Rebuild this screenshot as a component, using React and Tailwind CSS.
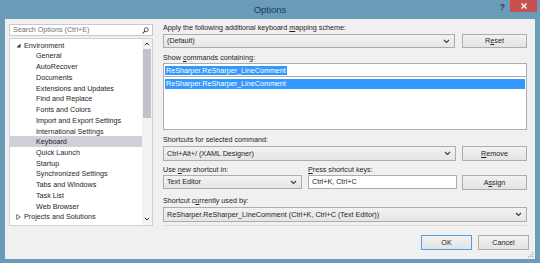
import React from "react";

const F = "font-['Liberation_Sans',Arial,sans-serif]";

function Chevron({ className = "" }) {
  return (
    <svg width="7" height="5" viewBox="0 0 7 5" className={className}>
      <polyline points="1,1 3.5,3.5 6,1" fill="none" stroke="#3c3c3c" strokeWidth="1.1" />
    </svg>
  );
}

function Combo({ text, className = "", h = "h-[14px]" }) {
  return (
    <div className={`${h} border border-[#acacac] bg-gradient-to-b from-[#f2f2f2] to-[#e5e5e5] flex items-center pl-[3px] pr-[4px] ${className}`}>
      <span className="flex-1 truncate text-[7.2px] text-[#1e1e1e] leading-[10px]">{text}</span>
      <Chevron />
    </div>
  );
}

function Btn({ children, className = "", h = "h-[14px]" }) {
  return (
    <div className={`${h} w-[65px] border border-[#adadad] bg-gradient-to-b from-[#f2f2f2] to-[#e3e3e3] flex items-center justify-center text-[7.2px] text-[#1e1e1e] leading-none ${className}`}>
      {children}
    </div>
  );
}

const tree = [
  "General",
  "AutoRecover",
  "Documents",
  "Extensions and Updates",
  "Find and Replace",
  "Fonts and Colors",
  "Import and Export Settings",
  "International Settings",
  "Keyboard",
  "Quick Launch",
  "Startup",
  "Synchronized Settings",
  "Tabs and Windows",
  "Task List",
  "Web Browser",
];

export default function App() {
  return (
    <div className={`w-[540px] h-[263px] bg-[#6a9cb9] flex flex-col ${F}`}>
      {/* Title bar */}
      <div className="h-[19px] grid grid-cols-[1fr_auto_1fr]">
        <div />
        <div className="text-[9.5px] text-[#1d3b50] leading-[19px]">Options</div>
        <div className="flex justify-end items-start">
          <span className="text-[8.5px] font-bold text-[#1d3b50] leading-[14px] mr-[5px]">?</span>
          <div className="w-[27px] h-[12px] bg-[#c75050] flex items-center justify-center mr-[3px]">
            <svg width="6" height="6" viewBox="0 0 6 6">
              <path d="M0.5 0.5 L5.5 5.5 M5.5 0.5 L0.5 5.5" stroke="#ffffff" strokeWidth="1.3" />
            </svg>
          </div>
        </div>
      </div>

      {/* Content */}
      <div className="mx-[5px] h-[240px] bg-[#f0f0f0] flex relative">
        {/* Left column */}
        <div className="ml-[4px] w-[144px] pt-[5px] flex flex-col">
          <div className="h-[12px] bg-white border border-[#c7c9d1] flex items-center pl-[3px] pr-[3px]">
            <span className="flex-1 text-[7.2px] text-[#717171] leading-none">Search Options (Ctrl+E)</span>
            <svg width="7" height="7" viewBox="0 0 7 7">
              <circle cx="4.3" cy="2.7" r="2" fill="none" stroke="#444" strokeWidth="0.9" />
              <path d="M2.9 4.1 L0.6 6.4" stroke="#444" strokeWidth="1.1" />
            </svg>
          </div>
          <div className="mt-[2px] h-[188px] bg-white border border-[#cfd1d8] flex overflow-hidden">
            <div className="flex-1 pt-[1px] flex flex-col text-[7.2px] text-[#1e1e1e] leading-none overflow-hidden">
              <div className="h-[10.73px] shrink-0 flex items-center">
                <svg width="5" height="5" viewBox="0 0 5 5" className="ml-[6px] mr-[3px]">
                  <polygon points="4.5,0.5 4.5,4.5 0.5,4.5" fill="#333" />
                </svg>
                <span>Environment</span>
              </div>
              {tree.map((t) => (
                <div
                  key={t}
                  className={`h-[10.73px] shrink-0 flex items-center pl-[26px] ${t === "Keyboard" ? "bg-[#cfd0d8]" : ""}`}
                >
                  {t}
                </div>
              ))}
              <div className="h-[10.73px] shrink-0 flex items-center">
                <svg width="5" height="6" viewBox="0 0 5 6" className="ml-[6px] mr-[3px]">
                  <polygon points="0.7,0.5 4.3,3 0.7,5.5" fill="none" stroke="#555" strokeWidth="0.8" />
                </svg>
                <span>Projects and Solutions</span>
              </div>
              <div className="h-[10.73px] shrink-0 flex items-center pl-[14px]">Source Control</div>
            </div>
            {/* scrollbar */}
            <div className="w-[10px] bg-[#f3f3f5] flex flex-col items-center">
              <div className="h-[9px] flex items-center">
                <svg width="6" height="4" viewBox="0 0 6 4">
                  <polyline points="0.8,3.3 3,1 5.2,3.3" fill="none" stroke="#333" strokeWidth="1" />
                </svg>
              </div>
              <div className="w-[8px] h-[69px] bg-[#c2c3c9] mt-[1px]" />
              <div className="flex-1" />
              <div className="h-[12px] flex items-center">
                <svg width="6" height="4" viewBox="0 0 6 4">
                  <polyline points="0.8,0.8 3,3 5.2,0.8" fill="none" stroke="#333" strokeWidth="1" />
                </svg>
              </div>
            </div>
          </div>
        </div>

        {/* Right column */}
        <div className="ml-[10px] w-[364px] pt-[4px] flex flex-col text-[7.2px] text-[#1e1e1e]">
          <div className="h-[10px] leading-[10px]">
            Apply the following additional keyboard <span className="underline">m</span>apping scheme:
          </div>
          <div className="mt-[1px] flex gap-[7px]">
            <Combo text="(Default)" className="flex-1" />
            <Btn>R<span className="underline">e</span>set</Btn>
          </div>
          <div className="mt-[5px] h-[10px] leading-[10px]">
            Show <span className="underline">c</span>ommands containing:
          </div>
          <div className="h-[14px] bg-white border border-[#abadb3] flex items-center pl-[1px]">
            <span className="bg-[#3399ff] text-white leading-[9px] px-[1px]">ReSharper.ReSharper_LineComment</span>
          </div>
          <div className="h-[53px] bg-white border border-[#abadb3] border-t-0 pt-[2px] px-[1px]">
            <div className="h-[10px] bg-[#3399ff] text-white leading-[10px] pl-[1px]">ReSharper.ReSharper_LineComment</div>
          </div>
          <div className="mt-[5px] h-[10px] leading-[10px]">Shortcuts for selected command:</div>
          <div className="mt-[1px] flex gap-[6px]">
            <Combo text="Ctrl+Alt+/ (XAML Designer)" className="flex-1" h="h-[15px]" />
            <Btn h="h-[15px]"><span className="underline">R</span>emove</Btn>
          </div>
          <div className="mt-[4px] h-[10px] leading-[10px] flex">
            <div className="w-[145px]">Use <span className="underline">n</span>ew shortcut in:</div>
            <div><span className="underline">P</span>ress shortcut keys:</div>
          </div>
          <div className="flex">
            <Combo text="Text Editor" className="w-[139px]" />
            <div className="ml-[6px] w-[149px] h-[14px] bg-white border border-[#abadb3] flex items-center pl-[3px] leading-none">
              Ctrl+K, Ctrl+C
            </div>
            <Btn className="ml-[5px]" h="h-[15px]">A<span className="underline">s</span>sign</Btn>
          </div>
          <div className="mt-[6px] h-[10px] leading-[10px]">
            Shortcut c<span className="underline">u</span>rrently used by:
          </div>
          <div className="mt-[1px]">
            <Combo text="ReSharper.ReSharper_LineComment (Ctrl+K, Ctrl+C (Text Editor))" h="h-[15px]" />
          </div>
          <div className="mt-[3px] h-px bg-[#dcdcdc]" />
          <div className="mt-[9px] flex justify-end gap-[6px] mr-[-2px]">
            <div className="h-[15px] w-[51px] border border-[#4fa0e8] bg-gradient-to-b from-[#f2f2f2] to-[#e3e3e3] flex items-center justify-center leading-none">
              OK
            </div>
            <div className="h-[15px] w-[51px] border border-[#adadad] bg-gradient-to-b from-[#f2f2f2] to-[#e3e3e3] flex items-center justify-center leading-none">
              Cancel
            </div>
          </div>
        </div>

        {/* resize grip */}
        <svg width="6" height="6" viewBox="0 0 6 6" className="absolute right-[1px] bottom-[1px]">
          <rect x="4" y="0" width="1.2" height="1.2" fill="#b5b5b5" />
          <rect x="2" y="2" width="1.2" height="1.2" fill="#b5b5b5" />
          <rect x="4" y="2" width="1.2" height="1.2" fill="#b5b5b5" />
          <rect x="0" y="4" width="1.2" height="1.2" fill="#b5b5b5" />
          <rect x="2" y="4" width="1.2" height="1.2" fill="#b5b5b5" />
          <rect x="4" y="4" width="1.2" height="1.2" fill="#b5b5b5" />
        </svg>
      </div>
    </div>
  );
}
